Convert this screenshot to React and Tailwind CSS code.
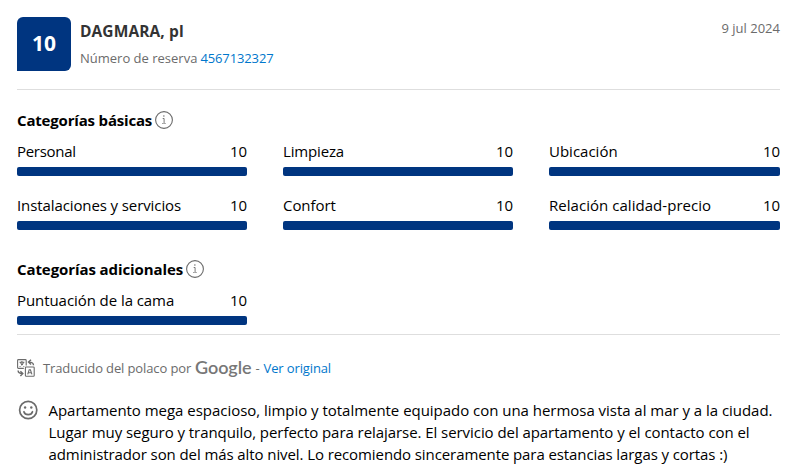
const BASIC = [
  { label: "Personal", track: "tracking-[-0.3px]" },
  { label: "Limpieza", track: "tracking-[-0.15px]" },
  { label: "Ubicación", track: "tracking-[0px]" },
  { label: "Instalaciones y servicios", track: "tracking-[-0.1px]" },
  { label: "Confort", track: "tracking-[-0.05px]" },
  { label: "Relación calidad-precio", track: "tracking-[0.04px]" },
];

function InfoIcon() {
  return (
    <svg className="ml-[3px] h-[18px] w-[18px] shrink-0" viewBox="0 0 18 18" fill="none" stroke="#6b6b6b">
      <circle cx="9" cy="9" r="8.4" strokeWidth="1.1" />
      <path d="M7.7 7.5H9.1V11.6Q9.1 12.5 10 12.5H10.6M7.3 12.5H8.6" strokeWidth="0.9" />
      <circle cx="8.9" cy="5.1" r="0.75" fill="#6b6b6b" stroke="none" />
    </svg>
  );
}

function TranslateIcon() {
  return (
    <svg className="-mt-0.5 h-[18px] w-[18px] shrink-0" viewBox="0 0 18 18" fill="none" stroke="#6b6b6b" strokeWidth="1.1">
      <path d="M6.8 9.4H1.4Q0.6 9.4 0.6 8.6V1.4Q0.6 0.6 1.4 0.6H8.4Q9.2 0.6 9.2 1.4V6.6" />
      <path d="M2.5 3.2H7.4M4.9 2V3.2M6.5 3.4C6 5.4 4.5 6.8 2.6 7.5M3.5 3.4C4 5.3 5.4 6.8 7.3 7.5" />
      <rect x="8.4" y="8" width="8.8" height="9.2" rx="0.8" />
      <path d="M10.7 15.4L12.2 10.8H13.4L14.9 15.4M11.3 13.7H14.3" />
      <path d="M16.5 6.2C16.5 4.2 15 3.1 11.8 3.1M14 0.7L11.5 3.1L14 5.5" strokeWidth="1.4" />
      <path d="M1.1 11.5C1.1 13.6 2.6 14.6 5.6 14.6M3.4 12.3L5.8 14.6L3.4 17" strokeWidth="1.4" />
    </svg>
  );
}

function SmileIcon() {
  return (
    <svg className="h-5 w-5 shrink-0" viewBox="0 0 20 20" fill="none" stroke="#6b6b6b" strokeWidth="1.7" strokeLinecap="round">
      <circle cx="10.2" cy="10" r="8.6" />
      <path d="M5.9 11.7C7 15.6 13.4 15.6 14.5 11.7" />
      <circle cx="7.1" cy="7.5" r="1.2" fill="#6b6b6b" stroke="none" />
      <circle cx="13.3" cy="7.5" r="1.2" fill="#6b6b6b" stroke="none" />
    </svg>
  );
}

function Score({ label, track }) {
  return (
    <div>
      <div className="flex h-6 items-center justify-between text-[15px] leading-6">
        <span className={track}>{label}</span>
        <span className="tracking-[-0.1px]">10</span>
      </div>
      <div className="mt-1 h-[9px] rounded-[2px] bg-[#003580]" />
    </div>
  );
}

export default function App() {
  return (
    <main className="h-[474px] w-[790px] overflow-hidden whitespace-nowrap bg-white pr-[10px] pl-[17px] pt-[17px] font-['Open_Sans','Noto_Sans',sans-serif] text-black">
      <header className="flex h-[73px] items-start border-b border-[#dedede]">
        <div className="flex h-[54px] w-[54px] items-center justify-center rounded-[6px] rounded-bl-none bg-[#003580] text-[21px] font-bold text-white">
          10
        </div>
        <div className="ml-[9px] pt-[3px]">
          <div className="text-[15.5px] leading-[22px] font-bold tracking-[0.1px] text-[#333]">DAGMARA, pl</div>
          <div className="mt-[5px] flex text-[13px] leading-[22px] text-[#6b6b6b]">
            <span className="font-medium">Número de reserva</span>
            <a className="ml-[3px] tracking-[-0.12px] text-[#0077cc]">4567132327</a>
          </div>
        </div>
        <time className="ml-auto text-[13px] leading-[22px] text-[#6b6b6b]">9 jul 2024</time>
      </header>

      <h2 className="mt-[18px] flex h-6 items-center text-[15px] font-bold">
        <span className="tracking-[-0.18px]">Categorías básicas</span>
        <InfoIcon />
      </h2>
      <div className="mt-[7px] grid grid-cols-[230px_230px_231px] gap-x-9 gap-y-[17px]">
        {BASIC.map((item) => (
          <Score key={item.label} {...item} />
        ))}
      </div>

      <h2 className="mt-[27px] flex h-6 items-center text-[15px] font-bold">
        <span className="tracking-[-0.09px]">Categorías adicionales</span>
        <InfoIcon />
      </h2>
      <div className="mt-[7px] grid h-[47px] grid-cols-[230px_230px_231px] gap-x-9 border-b border-[#dedede]">
        <Score label="Puntuación de la cama" track="tracking-[-0.07px]" />
      </div>

      <div className="mt-[22px] flex h-6 items-center text-[13px] text-[#6b6b6b]">
        <TranslateIcon />
        <span className="ml-2 tracking-[-0.12px]">Traducido del polaco por</span>
        <span className="ml-1 pb-[5px] font-['Lato'] text-[18px] leading-5 font-semibold tracking-[-0.1px] text-[#777]">Google</span>
        <span className="ml-1">-</span>
        <a className="ml-1 tracking-[-0.13px] text-[#0077cc]">Ver original</a>
      </div>

      <div className="mt-[19px] flex pl-px">
        <SmileIcon />
        <p className="-mt-px ml-[10.5px] text-[15px] leading-[22px]">
          <span className="block tracking-[-0.03px]">Apartamento mega espacioso, limpio y totalmente equipado con una hermosa vista al mar y a la ciudad.</span>
          <span className="block tracking-[-0.06px]">Lugar muy seguro y tranquilo, perfecto para relajarse. El servicio del apartamento y el contacto con el</span>
          <span className="block tracking-[-0.09px]">administrador son del más alto nivel. Lo recomiendo sinceramente para estancias largas y cortas :)</span>
        </p>
      </div>
    </main>
  );
}
